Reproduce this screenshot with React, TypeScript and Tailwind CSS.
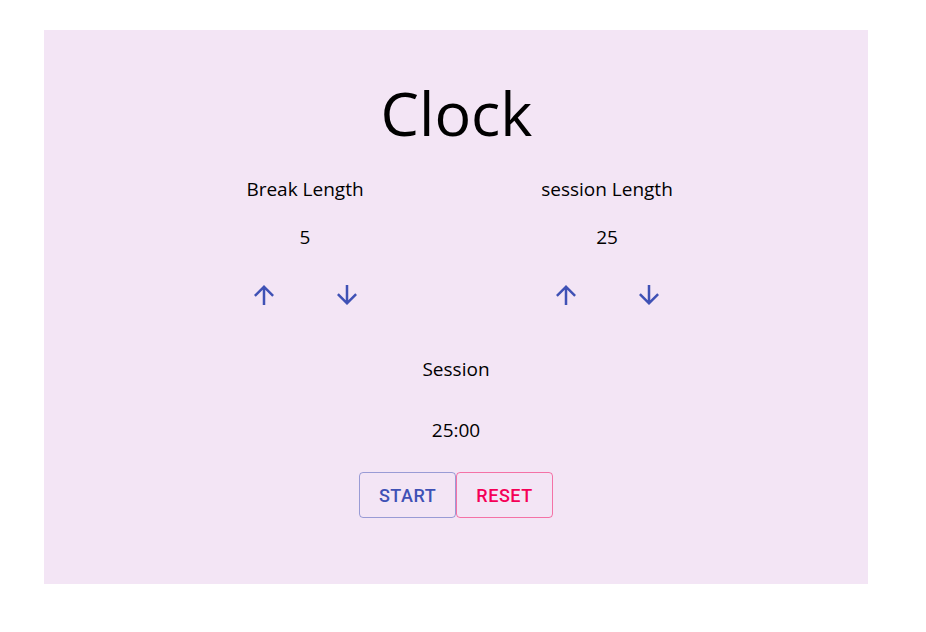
import { useState } from 'react';

function ArrowUp() {
  return (
    <svg viewBox="0 0 24 24" className="w-[30px] h-[30px] fill-[#3f51b5]">
      <path d="M4 12l1.41 1.41L11 7.83V20h2V7.83l5.58 5.59L20 12l-8-8-8 8z" />
    </svg>
  );
}

function ArrowDown() {
  return (
    <svg viewBox="0 0 24 24" className="w-[30px] h-[30px] fill-[#3f51b5]">
      <path d="M20 12l-1.41-1.41L13 16.17V4h-2v12.17l-5.58-5.59L4 12l8 8 8-8z" />
    </svg>
  );
}

function LengthControl({
  label,
  value,
  onUp,
  onDown,
}: {
  label: string;
  value: number;
  onUp: () => void;
  onDown: () => void;
}) {
  return (
    <div className="flex flex-col items-center">
      <div className="text-[19px] leading-[24px]">{label}</div>
      <div className="mt-[24px] text-[19px] leading-[24px]">{value}</div>
      <div className="mt-[31px] flex gap-[53px]">
        <button onClick={onUp} className="block">
          <ArrowUp />
        </button>
        <button onClick={onDown} className="block">
          <ArrowDown />
        </button>
      </div>
    </div>
  );
}

export default function App() {
  const [breakLength, setBreakLength] = useState(5);
  const [sessionLength, setSessionLength] = useState(25);

  return (
    <div className="bg-white min-h-[632px] pt-[30px] pl-[44px] font-['Segoe_UI','Open_Sans',sans-serif] text-black">
      <div className="w-[824px] h-[554px] bg-[#f3e5f5] pt-[44px] flex flex-col items-center">
        <h1 className="text-[61px] leading-[77px] ml-[1px]">Clock</h1>

        <div className="mt-[26px] w-[604px] grid grid-cols-2">
          <LengthControl
            label="Break Length"
            value={breakLength}
            onUp={() => setBreakLength((v) => Math.min(60, v + 1))}
            onDown={() => setBreakLength((v) => Math.max(1, v - 1))}
          />
          <LengthControl
            label="session Length"
            value={sessionLength}
            onUp={() => setSessionLength((v) => Math.min(60, v + 1))}
            onDown={() => setSessionLength((v) => Math.max(1, v - 1))}
          />
        </div>

        <div className="mt-[47px] text-[19px] leading-[24px]">Session</div>
        <div className="mt-[37px] text-[19px] leading-[24px]">
          {String(sessionLength).padStart(2, '0')}:00
        </div>

        <div className="mt-[30px] flex">
          <button className="w-[97px] h-[46px] rounded-[4px] border border-[#3f51b5]/50 text-[#3f51b5] font-['Roboto',sans-serif] font-medium text-[18px] uppercase tracking-[0.02857em]">
            Start
          </button>
          <button className="w-[97px] h-[46px] rounded-[4px] border border-[#f50057]/50 text-[#f50057] font-['Roboto',sans-serif] font-medium text-[18px] uppercase tracking-[0.02857em]">
            Reset
          </button>
        </div>
      </div>
    </div>
  );
}
